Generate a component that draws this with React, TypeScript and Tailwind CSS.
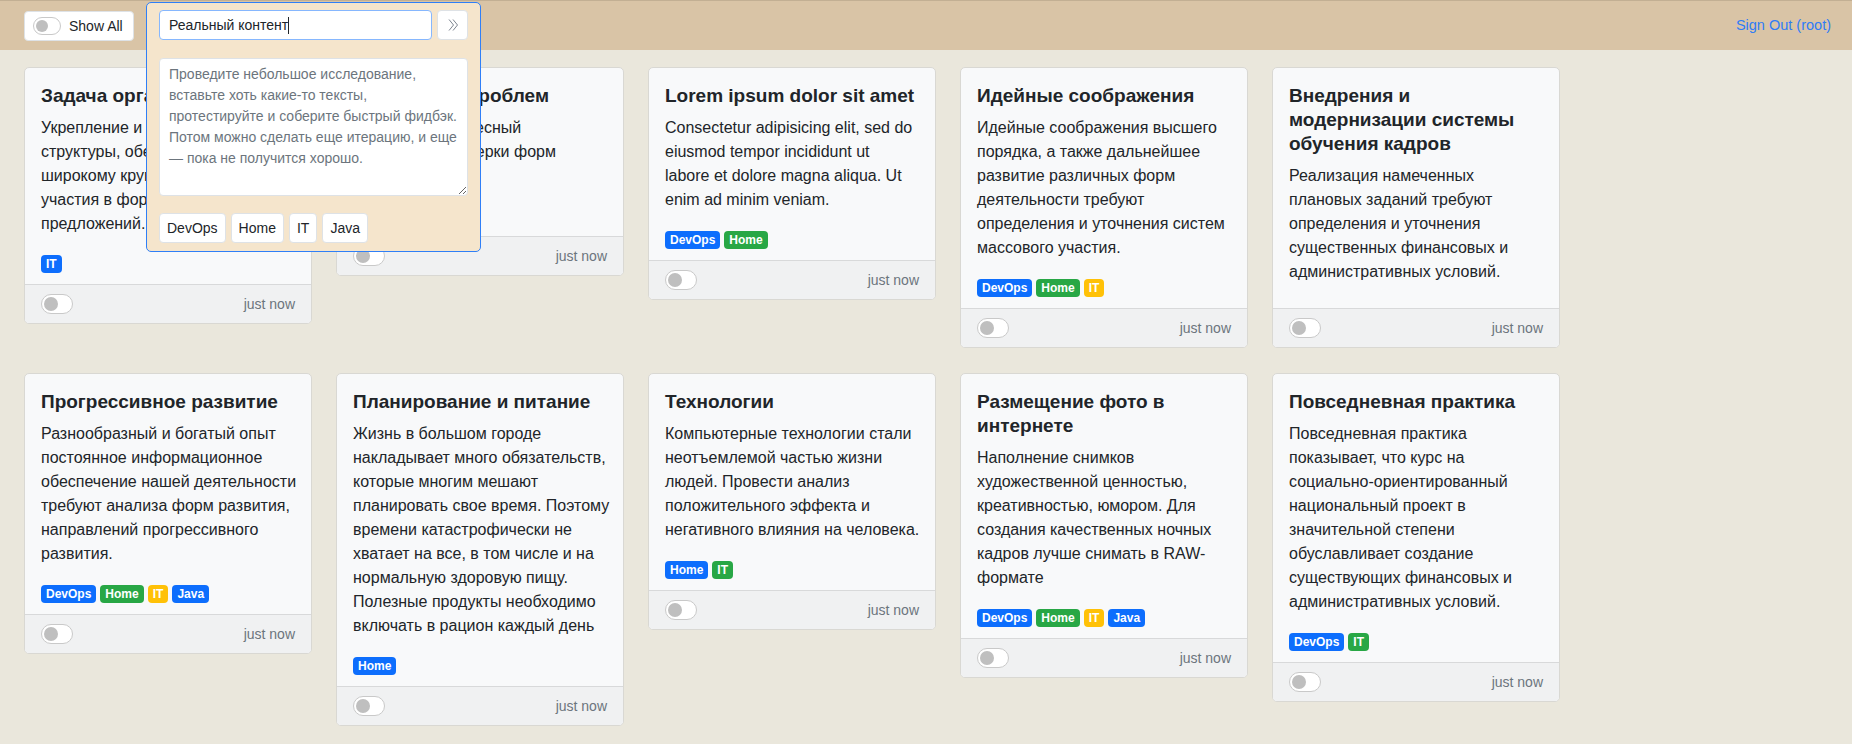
import React from 'react';

type Note = {
  title: string[];
  lines: string[];
  tags: string[];
};

const NOTES: Note[] = [
  {
    title: ['Задача организации'],
    lines: ['Укрепление и развитие', 'структуры, обеспечивает', 'широкому кругу', 'участия в формировании', 'предложений.'],
    tags: ['IT'],
  },
  {
    title: ['Выявление проблем'],
    lines: ['Это очень интересный', 'способ для проверки форм', 'и гипотез.'],
    tags: ['Home'],
  },
  {
    title: ['Lorem ipsum dolor sit amet'],
    lines: ['Consectetur adipisicing elit, sed do', 'eiusmod tempor incididunt ut', 'labore et dolore magna aliqua. Ut', 'enim ad minim veniam.'],
    tags: ['DevOps', 'Home'],
  },
  {
    title: ['Идейные соображения'],
    lines: [
      'Идейные соображения высшего',
      'порядка, а также дальнейшее',
      'развитие различных форм',
      'деятельности требуют',
      'определения и уточнения систем',
      'массового участия.',
    ],
    tags: ['DevOps', 'Home', 'IT'],
  },
  {
    title: ['Внедрения и', 'модернизации системы', 'обучения кадров'],
    lines: [
      'Реализация намеченных',
      'плановых заданий требуют',
      'определения и уточнения',
      'существенных финансовых и',
      'административных условий.',
    ],
    tags: [],
  },
  {
    title: ['Прогрессивное развитие'],
    lines: [
      'Разнообразный и богатый опыт',
      'постоянное информационное',
      'обеспечение нашей деятельности',
      'требуют анализа форм развития,',
      'направлений прогрессивного',
      'развития.',
    ],
    tags: ['DevOps', 'Home', 'IT', 'Java'],
  },
  {
    title: ['Планирование и питание'],
    lines: [
      'Жизнь в большом городе',
      'накладывает много обязательств,',
      'которые многим мешают',
      'планировать свое время. Поэтому',
      'времени катастрофически не',
      'хватает на все, в том числе и на',
      'нормальную здоровую пищу.',
      'Полезные продукты необходимо',
      'включать в рацион каждый день',
    ],
    tags: ['Home'],
  },
  {
    title: ['Технологии'],
    lines: [
      'Компьютерные технологии стали',
      'неотъемлемой частью жизни',
      'людей. Провести анализ',
      'положительного эффекта и',
      'негативного влияния на человека.',
    ],
    tags: ['Home', 'IT'],
  },
  {
    title: ['Размещение фото в', 'интернете'],
    lines: [
      'Наполнение снимков',
      'художественной ценностью,',
      'креативностью, юмором. Для',
      'создания качественных ночных',
      'кадров лучше снимать в RAW-',
      'формате',
    ],
    tags: ['DevOps', 'Home', 'IT', 'Java'],
  },
  {
    title: ['Повседневная практика'],
    lines: [
      'Повседневная практика',
      'показывает, что курс на',
      'социально-ориентированный',
      'национальный проект в',
      'значительной степени',
      'обуславливает создание',
      'существующих финансовых и',
      'административных условий.',
    ],
    tags: ['DevOps', 'IT'],
  },
];

const BADGE_COLORS = ['bg-[#0d6efd]', 'bg-[#28a745]', 'bg-[#ffc107]', 'bg-[#0d6efd]'];

function Toggle({ small }: { small?: boolean }) {
  return (
    <span
      className={
        small
          ? 'flex items-center w-[28px] h-[18px] rounded-full border border-[#c9c9c9] bg-white pl-[2px]'
          : 'flex items-center w-[32px] h-[20px] rounded-full border border-[#c9c9c9] bg-white pl-[2px]'
      }
    >
      <span className={small ? 'w-[12px] h-[12px] rounded-full bg-[#bfbfbf]' : 'w-[14px] h-[14px] rounded-full bg-[#bfbfbf]'} />
    </span>
  );
}

function NoteCard({ note }: { note: Note }) {
  return (
    <div className="w-[288px] rounded-[5px] border border-[#d9d8d3] bg-[#f8f9fa] overflow-hidden">
      <div className="px-4 pt-4 pb-2">
        <h5 className="text-[19px] leading-6 font-bold text-[#212529] mb-2">
          {note.title.map((t) => (
            <span key={t} className="block whitespace-nowrap">
              {t}
            </span>
          ))}
        </h5>
        <p className="text-base leading-6 text-[#212529] mb-4">
          {note.lines.map((l) => (
            <span key={l} className="block whitespace-nowrap">
              {l}
            </span>
          ))}
        </p>
        {note.tags.length > 0 && (
          <div className="flex items-center gap-1 h-6">
            {note.tags.map((tag, i) => (
              <span
                key={tag}
                className={`flex items-center h-[18px] px-[5px] rounded-[4px] text-[12px] font-bold text-white ${BADGE_COLORS[i]}`}
              >
                {tag}
              </span>
            ))}
          </div>
        )}
      </div>
      <div className="flex items-center justify-between h-[39px] px-4 border-t border-[#d8d9da] bg-[#f0f1f2]">
        <Toggle />
        <span className="text-sm text-[#6c757d]">just now</span>
      </div>
    </div>
  );
}

function EditPopup() {
  return (
    <div className="absolute left-[146px] top-[2px] w-[335px] rounded-[5px] border border-[#2f7ff7] bg-[#f5e5cc] px-3 pt-[7px] pb-2 z-10">
      <div className="flex items-center gap-[5px]">
        <div className="flex items-center flex-1 h-[30px] rounded-[4px] border border-[#86b7fe] bg-white pl-[9px] text-sm text-[#212529]">
          Реальный контент
          <span className="w-px h-[17px] bg-[#212529]" />
        </div>
        <button className="flex items-center justify-center w-[31px] h-[30px] rounded-[4px] border border-[#dee2e6] bg-white">
          <svg width="12" height="14" viewBox="0 0 12 14" fill="none" stroke="#7d8590" strokeWidth="1">
            <path d="M2 1.5l4.5 5.5L2 12.5" />
            <path d="M6 1.5l4.5 5.5L6 12.5" />
          </svg>
        </button>
      </div>
      <textarea
        className="block mt-[18px] w-full h-[138px] rounded-[4px] border border-[#dee2e6] bg-white px-[9px] py-[5px] text-sm leading-[21px] text-[#212529] placeholder:text-[#6c757d] outline-none"
        placeholder="Проведите небольшое исследование, вставьте хоть какие-то тексты, протестируйте и соберите быстрый фидбэк. Потом можно сделать еще итерацию, и еще — пока не получится хорошо."
      />
      <div className="flex items-center gap-[5px] mt-[17px]">
        {['DevOps', 'Home', 'IT', 'Java'].map((tag) => (
          <button
            key={tag}
            className="h-[30px] px-[7px] rounded-[4px] border border-[#dee2e6] bg-white text-sm text-[#212529]"
          >
            {tag}
          </button>
        ))}
      </div>
    </div>
  );
}

export default function App() {
  return (
    <div
      className="relative min-h-screen bg-[#eae7dc]"
      style={{ fontFamily: '"Liberation Sans", Arial, sans-serif' }}
    >
      <nav className="flex items-center justify-between h-[50px] pl-6 pr-[21px] border-t border-[#c2af93] bg-[#d9c4a6]">
        <button className="flex items-center gap-2 h-[30px] pl-2 pr-[10px] rounded-[4px] border border-[#dee2e6] bg-white text-sm text-[#212529]">
          <Toggle small />
          Show All
        </button>
        <a href="#" className="text-[14.5px] text-[#2f7cf6]">
          Sign Out (root)
        </a>
      </nav>

      <EditPopup />

      <main className="flex flex-wrap items-start gap-x-6 gap-y-[25px] px-6 pt-[17px] pb-4">
        {NOTES.map((note) => (
          <NoteCard key={note.title.join(' ')} note={note} />
        ))}
      </main>
    </div>
  );
}
